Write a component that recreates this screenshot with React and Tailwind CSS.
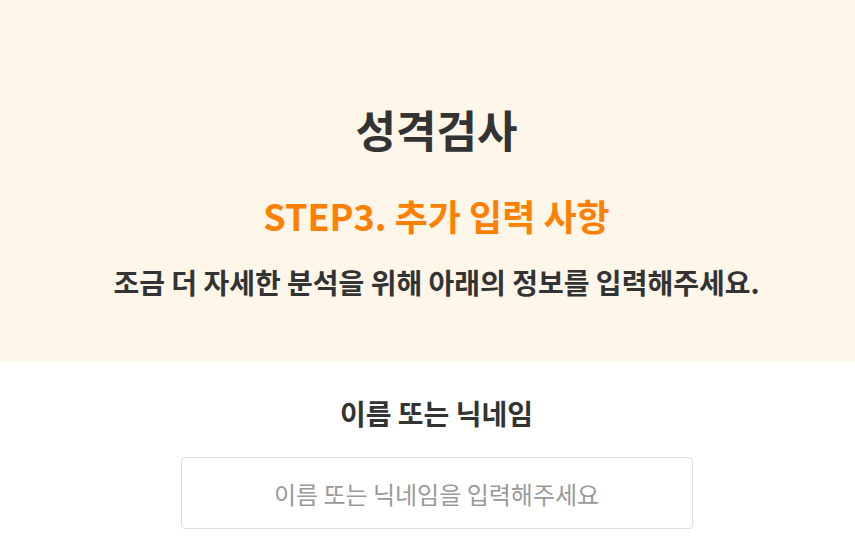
import React from 'react';

export default function App() {
    return (
        <div
            className="min-h-[550px] bg-white text-[#333]"
            style={{ fontFamily: '"Noto Sans CJK KR", "Noto Sans", sans-serif' }}
        >
            <header className="h-[361px] bg-[#fff6ea] flex flex-col items-center pt-[97px] pl-[18px]">
                <h1 className="text-[44px] font-bold leading-[64px]">성격검사</h1>
                <h2 className="mt-[28px] text-[36px] font-bold leading-[52px] text-[#ff8000]">
                    STEP3. 추가 입력 사항
                </h2>
                <p className="mt-[21px] text-[28px] font-bold leading-[40px]">
                    조금 더 자세한 분석을 위해 아래의 정보를 입력해주세요.
                </p>
            </header>

            <section className="flex flex-col items-center pt-[32px] pl-[18px]">
                <label className="text-[28px] font-bold leading-[40px]">이름 또는 닉네임</label>
                <input
                    type="text"
                    placeholder="이름 또는 닉네임을 입력해주세요"
                    className="mt-[24px] w-[512px] h-[72px] rounded border border-[#ddd] text-center text-[24px] placeholder:text-[#999] outline-none"
                />
            </section>
        </div>
    );
}
